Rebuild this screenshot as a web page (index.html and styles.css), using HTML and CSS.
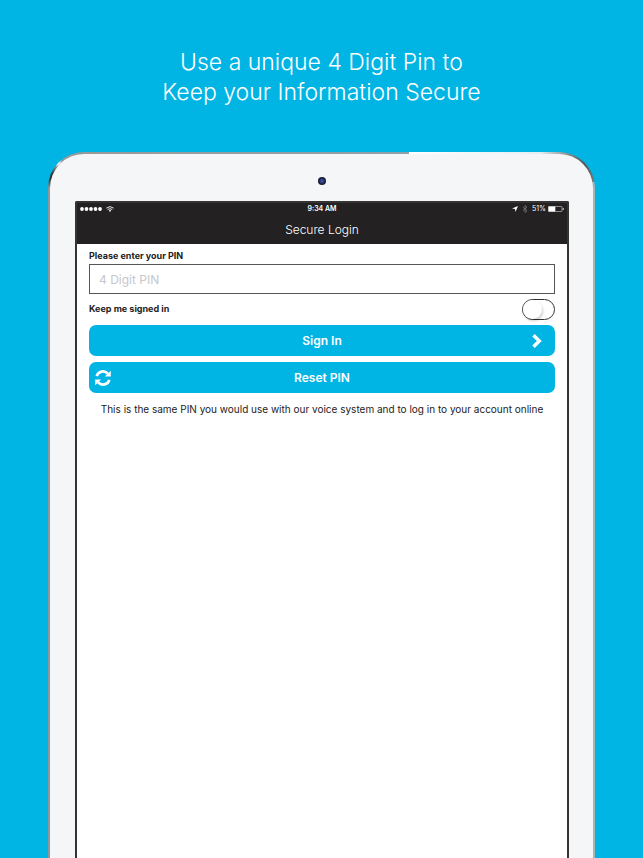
FILE: index.html
```html
<!DOCTYPE html>
<html lang="en">
<head>
    <meta charset="UTF-8">
    <meta name="viewport" content="width=device-width, initial-scale=1.0">
    <title>Secure Login</title>
    <link rel="stylesheet" href="styles.css">
</head>
<body>

    <h1 class="headline">Use a unique 4 Digit Pin to<br>Keep your Information Secure</h1>

    <div class="tablet">
        <div class="tablet-face">
            <div class="camera"></div>

            <div class="screen">
                <header class="top-bar">
                    <div class="status-bar">
                        <div class="status-left">
                            <svg class="signal" viewBox="0 0 22 4" width="22" height="4" fill="#fff">
                                <circle cx="2" cy="2" r="1.9"/>
                                <circle cx="6.5" cy="2" r="1.9"/>
                                <circle cx="11" cy="2" r="1.9"/>
                                <circle cx="15.5" cy="2" r="1.9"/>
                                <circle cx="20" cy="2" r="1.9"/>
                            </svg>
                            <svg viewBox="0 0 8 6" width="8" height="6" fill="none" stroke="#fff">
                                <path d="M.4 2.1Q4-.9 7.6 2.1M1.7 3.6Q4 1.7 6.3 3.6" stroke-width=".9"/>
                                <path d="M2.8 4.6Q4 3.6 5.2 4.6L4 6Z" fill="#fff" stroke="none"/>
                            </svg>
                        </div>
                        <div class="status-time">9:34 AM</div>
                        <div class="status-right">
                            <svg viewBox="0 0 6 6" width="6" height="6" fill="#fff">
                                <path d="M6 0 3.5 6 3 3 0 2.6Z"/>
                            </svg>
                            <svg viewBox="0 0 6 8" width="6" height="8" fill="none" stroke="#777" stroke-width=".8">
                                <path d="M.8 2.1 5 5.8 3 7.5V.5L5 2.2.8 5.9"/>
                            </svg>
                            <span>51%</span>
                            <svg class="battery" viewBox="0 0 16 6" width="16" height="6">
                                <rect x=".4" y=".4" width="13.6" height="5.2" rx=".6" fill="none" stroke="#ccc" stroke-width=".7"/>
                                <rect x=".5" y=".5" width="6.8" height="5" fill="#fff"/>
                                <path d="M14.8 2h.8v2h-.8z" fill="#fff"/>
                            </svg>
                        </div>
                    </div>
                    <h2 class="title">Secure Login</h2>
                </header>

                <form class="login">
                    <label class="label" for="pin">Please enter your PIN</label>
                    <input class="pin" type="text" id="pin" inputmode="numeric" maxlength="4" placeholder="4 Digit PIN" autocomplete="off">

                    <div class="keep-row">
                        <label class="label" for="keep">Keep me signed in</label>
                        <input class="switch" type="checkbox" id="keep">
                    </div>

                    <button class="btn" type="button">
                        Sign In
                        <svg class="icon-right" viewBox="0 0 10 14" width="10" height="14" fill="none" stroke="#fff" stroke-width="3.4">
                            <path d="M1.5 1.2 7.3 7l-5.8 5.8"/>
                        </svg>
                    </button>
                    <button class="btn" type="button">
                        <svg class="icon-left" viewBox="0 0 16 16" width="16" height="16">
                            <path d="M1.7 6.2A6.5 6.5 0 0 1 12.8 3.6M14.3 9.8A6.5 6.5 0 0 1 3.2 12.4" fill="none" stroke="#fff" stroke-width="2.7"/>
                            <path d="M15.8.8v5.7h-5.9ZM.2 15.2V9.5h5.9Z" fill="#fff"/>
                        </svg>
                        Reset PIN
                    </button>

                    <p class="note">This is the same PIN you would use with our voice system and to log in to your account online</p>
                </form>
            </div>
        </div>
    </div>

</body>
</html>
```

FILE: styles.css
```css
:root {
    --blue: #00b5e4;
    --dark: #232122;
    --bezel: #f4f6f8;
}

* { box-sizing: border-box; }

body {
    margin: 0;
    min-height: 100vh;
    display: flex;
    flex-direction: column;
    background: var(--blue);
    color: var(--dark);
    font-family: Inter, "Liberation Sans", sans-serif;
}

.headline {
    margin: 0;
    padding: 47px 20px 45px;
    color: #fff;
    font-size: 23px;
    font-weight: 300;
    line-height: 30px;
    text-align: center;
}

/* tablet: metal rim around a white face, cut off by the page bottom */
.tablet {
    flex: 1;
    display: flex;
    margin: 0 48px;
    padding: 2px 2px 0;
    border-radius: 36px 36px 0 0;
    background:
        radial-gradient(circle at 9px 10px, #fff 2px, transparent 5px),
        radial-gradient(circle at 2px 24px, #333 3px, transparent 12px),
        linear-gradient(90deg, #999 20px, #8fa0a8 66%, #fff 66%, #e4eef2 90%, #555 98%, #777 100%) top / 100% 30px no-repeat,
        linear-gradient(90deg, #8d979c 50%, #a9b4b9 50%);
}

.tablet-face {
    flex: 1;
    display: flex;
    flex-direction: column;
    padding: 0 24px 0 25px;
    border-radius: 34px 34px 0 0;
    background: var(--bezel);
}

.camera {
    width: 8px;
    height: 8px;
    margin: 23px auto 16px;
    border-radius: 50%;
    background: radial-gradient(circle, #3a4f9a 1px, #1a2147 3px, #171824 4px);
}

.screen {
    flex: 1;
    border: 2px solid #353334;
    border-bottom: 0;
    border-radius: 2px 2px 0 0;
    background: #fff;
}

.top-bar {
    height: 41px;
    background: var(--dark);
    color: #fff;
}

.status-bar {
    display: grid;
    grid-template-columns: 1fr auto 1fr;
    align-items: center;
    height: 12px;
    padding: 0 3px;
    font-size: 7px;
    line-height: 12px;
}

.status-left,
.status-right {
    display: flex;
    align-items: center;
    gap: 4px;
}

.status-right { justify-content: flex-end; }

.status-time { font-weight: 600; }

.battery { margin-left: -2px; }

.title {
    margin: 0;
    padding-top: 5px;
    font-size: 12px;
    font-weight: 300;
    line-height: 20px;
    text-align: center;
}

.login {
    display: flex;
    flex-direction: column;
    padding: 6px 12px;
}

.label {
    font-size: 9px;
    font-weight: 700;
    line-height: 12px;
}

.pin {
    width: 100%;
    height: 30px;
    margin-top: 2px;
    padding: 0 9px;
    border: 1px solid #555;
    border-radius: 0;
    background: #fff;
    color: var(--dark);
    font-family: inherit;
    font-size: 12px;
    outline: none;
}

.pin::placeholder { color: #c7c7cc; }

.keep-row {
    display: flex;
    justify-content: space-between;
    margin: 5px 0;
}

.keep-row .label { padding-top: 4px; }

.switch {
    appearance: none;
    width: 33px;
    height: 21px;
    margin: 0;
    border: 1px solid #333;
    border-radius: 11px;
    background: #fff;
    cursor: pointer;
}

.switch::before {
    content: "";
    display: block;
    width: 19px;
    height: 19px;
    border-radius: 50%;
    background: #fff;
    box-shadow: 1px 2px 3px rgba(0, 0, 0, 0.2);
}

.switch:checked { background: var(--blue); }

.switch:checked::before { margin-left: auto; }

.btn {
    position: relative;
    height: 31px;
    margin-bottom: 6px;
    padding: 0;
    border: 0;
    border-radius: 7px;
    background: var(--blue);
    color: #fff;
    font-family: inherit;
    font-size: 12px;
    font-weight: 600;
    cursor: pointer;
}

/* icons sit over the button, so the text stays centred */
.icon-left,
.icon-right {
    position: absolute;
    top: 50%;
    transform: translateY(-50%);
}

.icon-left { left: 6px; }

.icon-right { right: 13px; }

.note {
    margin: 3px 0 0;
    font-size: 10px;
    line-height: 14px;
    text-align: center;
}
```
